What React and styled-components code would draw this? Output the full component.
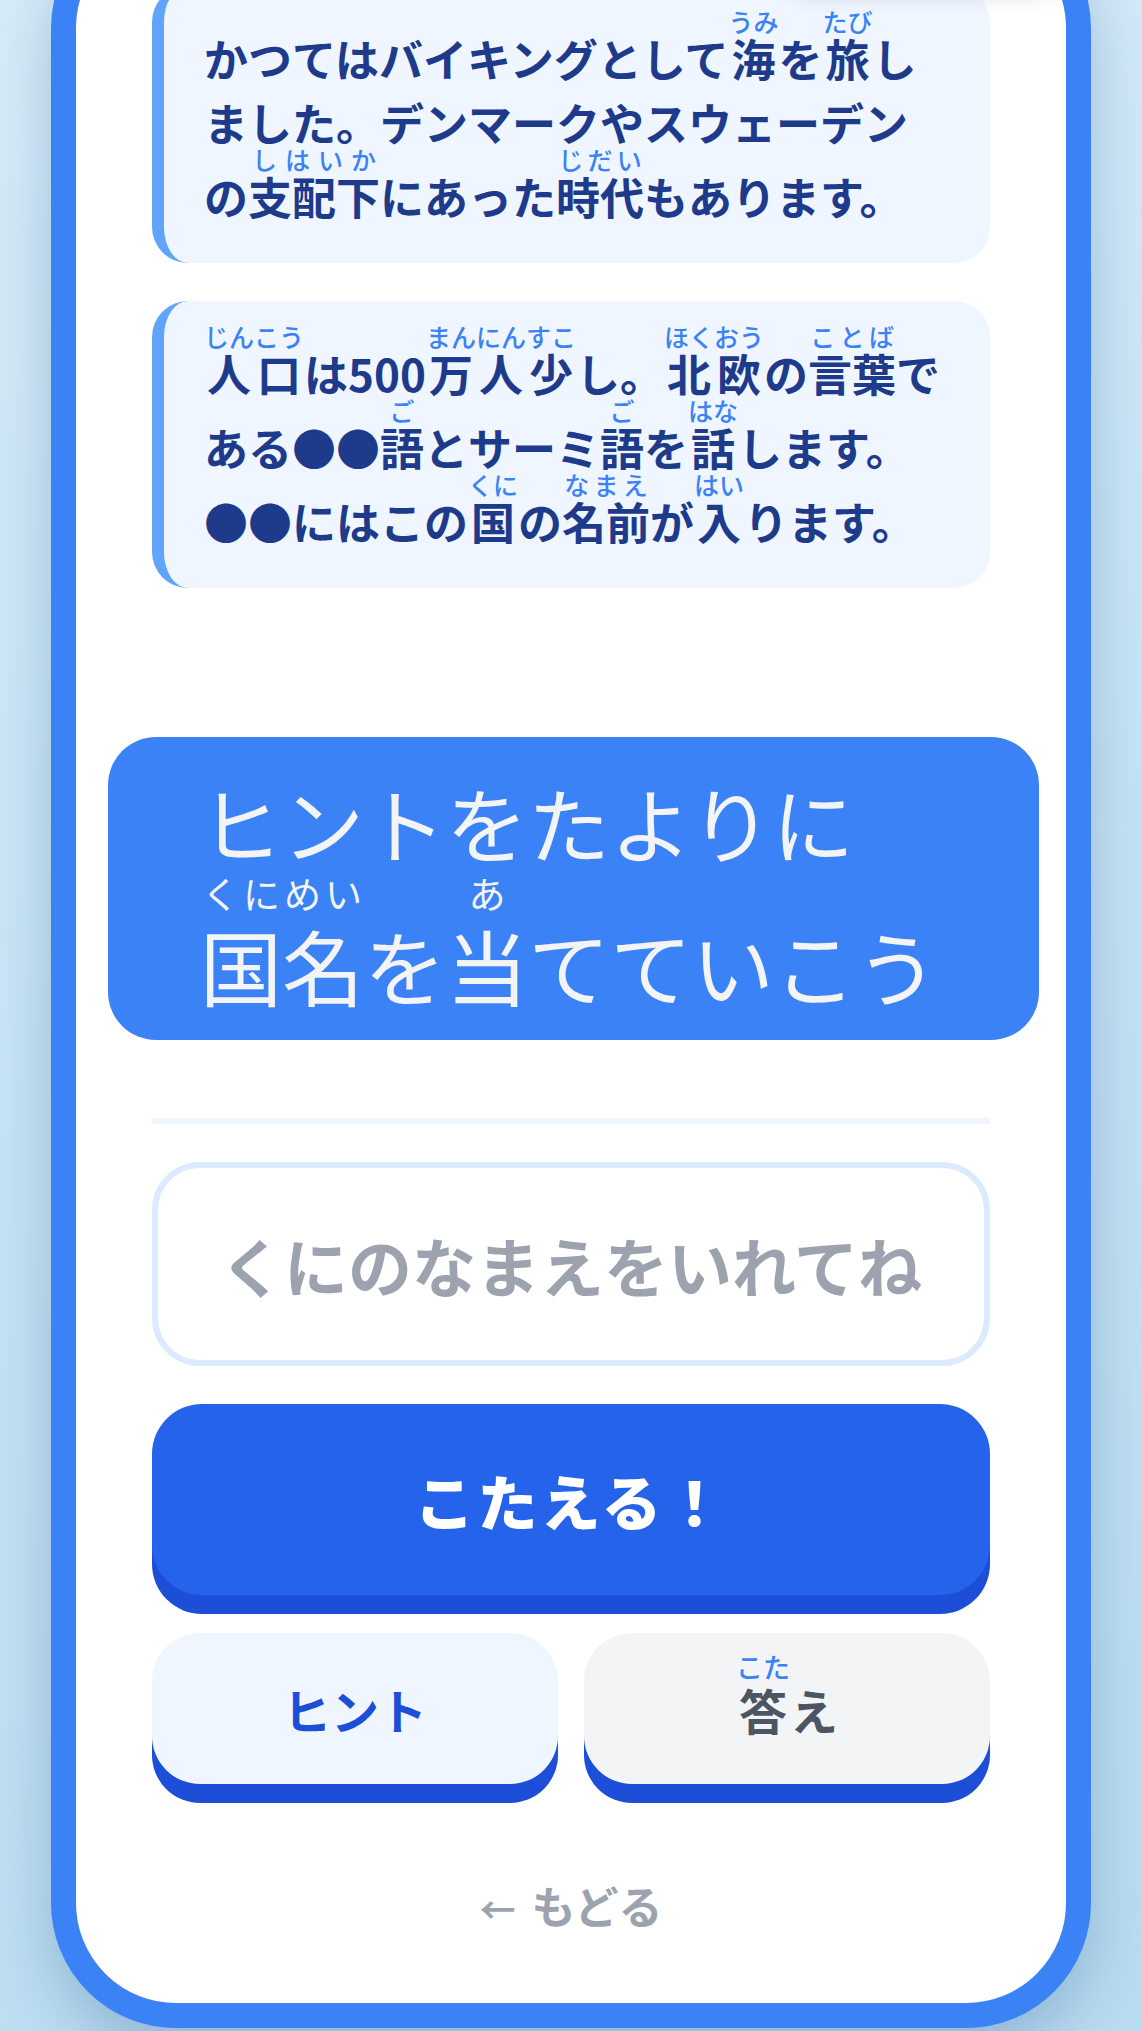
import styled, { createGlobalStyle } from 'styled-components';

const GlobalStyle = createGlobalStyle`
  html, body {
    margin: 0;
    padding: 0;
  }
  html {
    background: #c6e3f4;
  }
  body {
    font-family: "Noto Sans CJK JP", "Noto Sans", sans-serif;
    overflow: hidden;
  }
`;

const Page = styled.div`
  min-height: 100vh;
  box-sizing: border-box;
  padding: 0 51px 6px;
  background: linear-gradient(160deg, #d8edf9 0%, #c6e3f4 55%, #b9dcf0 100%);
`;

const Phone = styled.div`
  position: relative;
  margin-top: -97px;
  border: 25px solid #3b82f6;
  border-radius: 125px;
  background: #fff;
  box-shadow: 0 24px 60px rgba(30, 80, 140, 0.28);
  padding: 58px 76px 65px;
  display: flex;
  flex-direction: column;
  gap: 38px;
`;

/* score pill above the visible area, only its shadow shows */
const TopPill = styled.div`
  position: absolute;
  top: 0;
  right: 6px;
  width: 280px;
  height: 52px;
  border-radius: 0 0 28px 28px;
  background: #fff;
  box-shadow: 0 10px 24px rgba(0, 0, 0, 0.24);
`;

const FactCard = styled.div`
  background: #eff6ff;
  border-left: 12px solid #60a5fa;
  border-radius: 36px;
  padding: 30px 40px 35px;
  font-size: 44px;
  font-weight: 700;
  line-height: 64px;
  color: #1e3a8a;
  white-space: nowrap;
`;

/* hand made ruby: reading on top, base below, both spread like ruby-align: space-around */
const RubyBox = styled.span`
  display: inline-block;
`;

const RubyReading = styled.span`
  display: flex;
  justify-content: space-around;
  font-size: ${(p) => p.$size}px;
  font-weight: ${(p) => p.$weight || 500};
  line-height: ${(p) => p.$gap}px;
  margin-top: ${(p) => (p.$overhang ? -p.$gap : 0)}px;
  color: ${(p) => p.$color || '#3b82f6'};
`;

const RubyBase = styled.span`
  display: flex;
  justify-content: space-around;
`;

const Banner = styled.h2`
  margin: 111px -49px 0 -44px;
  background: #3b82f6;
  border-radius: 48px;
  padding: 35px 50px 25px 92px;
  font-size: 82px;
  font-weight: 400;
  line-height: 100px;
  color: #f3f4f6;
  white-space: nowrap;
`;

const Divider = styled.hr`
  margin: 40px 0 0;
  border: none;
  height: 6px;
  background: #eff6ff;
`;

const AnswerInput = styled.input`
  box-sizing: border-box;
  width: 100%;
  height: 204px;
  border: 6px solid #dbeafe;
  border-radius: 48px;
  background: #fff;
  outline: none;
  font-family: inherit;
  font-size: 64px;
  font-weight: 700;
  text-align: center;
  color: #374151;
  &::placeholder {
    color: #9ca3af;
  }
`;

const SubmitButton = styled.button`
  height: 191px;
  border: none;
  border-radius: 50px;
  background: #2563eb;
  box-shadow: 0 19px 0 #1d4ed8;
  font-family: inherit;
  font-size: 60px;
  font-weight: 900;
  letter-spacing: 3px;
  color: #fff;
`;

const ButtonRow = styled.div`
  display: grid;
  grid-template-columns: 1fr 1fr;
  gap: 26px;
`;

const SubButton = styled.button`
  height: 151px;
  border: none;
  border-radius: 48px;
  background: ${(p) => (p.$muted ? '#f3f4f6' : '#eff6ff')};
  box-shadow: 0 19px 0 #1d4ed8;
  font-family: inherit;
  font-size: 48px;
  font-weight: 700;
  line-height: 72px;
  color: ${(p) => (p.$muted ? '#4b5563' : '#1d4ed8')};
`;

const BackLink = styled.a`
  margin-top: 53px;
  align-self: center;
  font-size: 44px;
  font-weight: 700;
  line-height: 60px;
  color: #9ca3af;
  text-decoration: none;
`;

const Arrow = styled.span`
  font-size: 36px;
  margin-right: 16px;
`;

const chars = (s) => [...s].map((c, i) => <span key={i}>{c}</span>);

function R({ base, ruby, size = 25, gap = 10, color, weight, overhang }) {
  return (
    <RubyBox>
      <RubyReading $size={size} $gap={gap} $color={color} $weight={weight} $overhang={overhang}>
        {chars(ruby)}
      </RubyReading>
      <RubyBase>{chars(base)}</RubyBase>
    </RubyBox>
  );
}

function Banr(props) {
  return <R size={37} gap={43} color="#f3f4f6" weight={400} {...props} />;
}

export default function App() {
  return (
    <>
      <GlobalStyle />
      <Page>
        <Phone>
          <TopPill />
          <FactCard>
            かつてはバイキングとして<R base="海" ruby="うみ" />を<R base="旅" ruby="たび" />し
            <br />
            ました。デンマークやスウェーデン
            <br />
            の<R base="支配下" ruby="しはいか" />にあった<R base="時代" ruby="じだい" />もあります。
          </FactCard>
          <FactCard>
            <R base="人口" ruby="じんこう" />は500<R base="万人少" ruby="まんにんすこ" />し。
            <R base="北欧" ruby="ほくおう" />の<R base="言葉" ruby="ことば" />で
            <br />
            ある●●<R base="語" ruby="ご" />とサーミ<R base="語" ruby="ご" />を
            <R base="話" ruby="はな" />します。
            <br />
            ●●にはこの<R base="国" ruby="くに" />の<R base="名前" ruby="なまえ" />が
            <R base="入" ruby="はい" />ります。
          </FactCard>
          <Banner>
            ヒントをたよりに
            <br />
            <Banr base="国名" ruby="くにめい" />を<Banr base="当" ruby="あ" />てていこう
          </Banner>
          <Divider />
          <AnswerInput type="text" placeholder="くにのなまえをいれてね" />
          <SubmitButton>こたえる！</SubmitButton>
          <ButtonRow>
            <SubButton>ヒント</SubButton>
            <SubButton $muted>
              <R base="答" ruby="こた" size={27} gap={12} overhang />え
            </SubButton>
          </ButtonRow>
          <BackLink href="#">
            <Arrow>←</Arrow>もどる
          </BackLink>
        </Phone>
      </Page>
    </>
  );
}
